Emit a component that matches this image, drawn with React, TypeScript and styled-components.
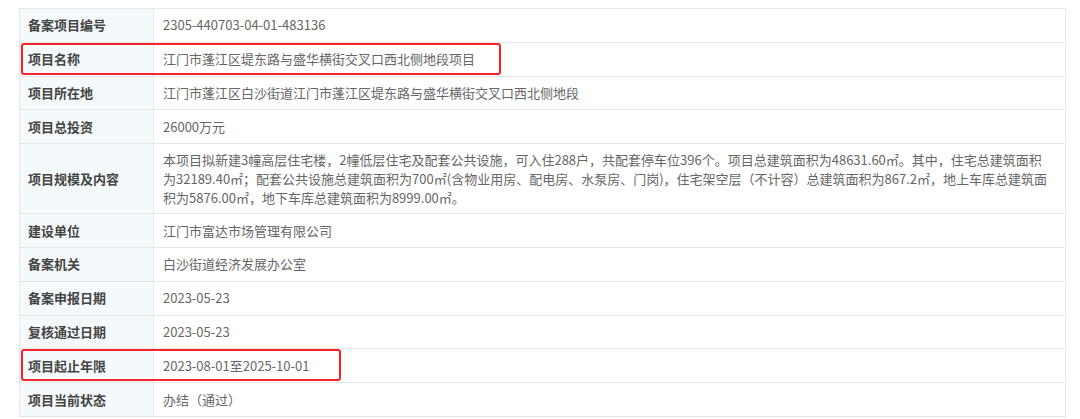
import styled, { createGlobalStyle } from 'styled-components';

const GlobalStyle = createGlobalStyle`
  html, body {
    margin: 0;
    padding: 0;
    background: #ffffff;
  }
  body {
    font-family: 'Noto Sans CJK SC', 'Noto Sans', sans-serif;
  }
`;

type Item = {
  label: string;
  value: React.ReactNode;
  highlight?: number;
  tall?: boolean;
};

const items: Item[] = [
  { label: '备案项目编号', value: '2305-440703-04-01-483136' },
  { label: '项目名称', value: '江门市蓬江区堤东路与盛华横街交叉口西北侧地段项目', highlight: 480 },
  { label: '项目所在地', value: '江门市蓬江区白沙街道江门市蓬江区堤东路与盛华横街交叉口西北侧地段' },
  { label: '项目总投资', value: '26000万元' },
  {
    label: '项目规模及内容',
    tall: true,
    value: (
      <>
        本项目拟新建3幢高层住宅楼，2幢低层住宅及配套公共设施，可入住288户，共配套停车位396个。项目总建筑面积为48631.60㎡。其中，住宅总建筑面积
        <br />
        为32189.40㎡；配套公共设施总建筑面积为700㎡(含物业用房、配电房、水泵房、门岗)，住宅架空层（不计容）总建筑面积为867.2㎡，地上车库总建筑面
        <br />
        积为5876.00㎡，地下车库总建筑面积为8999.00㎡。
      </>
    ),
  },
  { label: '建设单位', value: '江门市富达市场管理有限公司' },
  { label: '备案机关', value: '白沙街道经济发展办公室' },
  { label: '备案申报日期', value: '2023-05-23' },
  { label: '复核通过日期', value: '2023-05-23' },
  { label: '项目起止年限', value: '2023-08-01至2025-10-01', highlight: 320 },
  { label: '项目当前状态', value: '办结（通过）' },
];

const App = () => {
  return (
    <Page>
      <GlobalStyle />
      <Table>
        {items.map((item) => (
          <Row key={item.label} tall={item.tall}>
            <Label>{item.label}</Label>
            <Value tall={item.tall}>{item.value}</Value>
            {item.highlight && <Highlight width={item.highlight} />}
          </Row>
        ))}
      </Table>
    </Page>
  );
};

const Page = styled.div`
  padding: 8px 16px 0 19px;
`;

const Table = styled.div`
  width: 1045px;
  border: 1px solid #e8e8e8;
  border-bottom: none;
  display: flex;
  flex-direction: column;
`;

const Row = styled.div<{ tall?: boolean }>`
  position: relative;
  display: grid;
  grid-template-columns: 134px 1fr;
  height: ${({ tall }) => (tall ? '70px' : '33.8px')};
  box-sizing: border-box;
  border-bottom: 1px solid #e6e6e6;
`;

const Label = styled.div`
  background: #f4fafb;
  border-right: 1px solid #e8e8e8;
  padding: 0 8px;
  display: flex;
  align-items: center;
  font-size: 13px;
  font-weight: 700;
  color: #444444;
  line-height: 20px;
`;

const Value = styled.div<{ tall?: boolean }>`
  padding: 0 9px;
  font-size: 13px;
  color: #666666;
  line-height: ${({ tall }) => (tall ? '19px' : '20px')};
  white-space: nowrap;
  display: flex;
  align-items: center;
`;

const Highlight = styled.div<{ width: number }>`
  position: absolute;
  left: 1px;
  top: 0px;
  bottom: 1px;
  width: ${({ width }) => width}px;
  border: 2px solid #f5242a;
  border-radius: 3px;
  box-sizing: border-box;
  pointer-events: none;
`;

export default App;
